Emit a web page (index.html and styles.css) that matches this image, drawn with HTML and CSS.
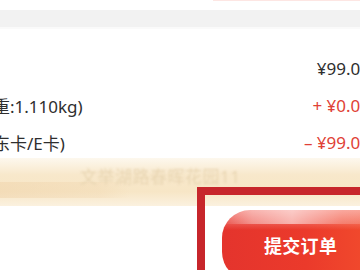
FILE: index.html
```html
<!DOCTYPE html>
<html lang="zh-CN">
<head>
<meta charset="utf-8">
<link rel="stylesheet" href="styles.css">
</head>
<body>
<div class="page">
  <div class="top"><div class="top-line"></div></div>
  <div class="sep"></div>
  <div class="rows">
    <div class="row"><span class="label"></span><span class="val">¥99.00</span></div>
    <div class="row"><span class="label">重:1.110kg)</span><span class="val red">+ ¥0.00</span></div>
    <div class="row"><span class="label">东卡/E卡)</span><span class="val red">– ¥99.00</span></div>
  </div>
  <div class="banner"><span class="addr">文举湖路春晖花园11</span></div>
  <div class="bar">
    <div class="btn">提交订单</div>
  </div>
  <div class="highlight"></div>
</div>
</body>
</html>
```
FILE: styles.css
```css
html, body {
  margin: 0;
  padding: 0;
  background: #fff;
}
.page {
  position: relative;
  width: 360px;
  height: 270px;
  overflow: hidden;
  font-family: "Noto Sans", "Noto Sans CJK SC", sans-serif;
  color: #333;
}
.top {
  height: 10px;
}
.top-line {
  margin-left: 213px;
  height: 1px;
  background: #fde6e3;
}
.sep {
  height: 17px;
  background: #f2f2f2;
  border-bottom: 2px solid #fafafa;
}
.rows {
  margin: 21px -10px 0 -7px;
}
.row {
  display: flex;
  justify-content: space-between;
  align-items: center;
  height: 37px;
  font-size: 17px;
}
.label {
  color: #2e2e2e;
}
.val {
  color: #2e2e2e;
}
.val.red {
  color: #df4136;
}
.banner {
  height: 48px;
  margin-top: -3px;
  padding-left: 80px;
  line-height: 38px;
  background:
    linear-gradient(90deg, rgba(238,208,166,0.45) 0, rgba(238,208,166,0.25) 100px, rgba(255,255,255,0) 130px) 0 24px / 100% 16px no-repeat,
    linear-gradient(180deg, #fdf8ee 0%, #f8e8cb 35%, #f7e6c6 70%, #fbf1df 100%);
}
.addr {
  font-size: 17px;
  color: #e8d5b2;
  filter: blur(1px);
  letter-spacing: 0.5px;
}
.bar {
  display: flex;
  padding-top: 4px;
}
.btn {
  flex: 1;
  margin-left: 222px;
  margin-right: -30px;
  height: 70px;
  border-radius: 28px 0 0 28px;
  display: flex;
  align-items: center;
  padding-left: 42px;
  font-size: 18px;
  font-weight: 700;
  color: #fff;
  letter-spacing: 0.3px;
  background:
    linear-gradient(90deg, rgba(255,255,255,0) 0, rgba(255,255,255,0.35) 30px, rgba(255,255,255,0.55) 70px, rgba(255,255,255,0.2) 120px, rgba(255,255,255,0.1) 100%) 0 0 / 100% 14px no-repeat,
    linear-gradient(180deg, rgba(255,200,195,0.6) 0, rgba(255,200,195,0.2) 14px, rgba(255,255,255,0) 20px),
    linear-gradient(90deg, #e4342d 0%, #eb3a2b 50%, #f3502d 100%);
}
.highlight {
  position: absolute;
  left: 197px;
  top: 187px;
  width: 200px;
  height: 120px;
  border: 8px solid #c7262b;
  box-sizing: border-box;
}
```
